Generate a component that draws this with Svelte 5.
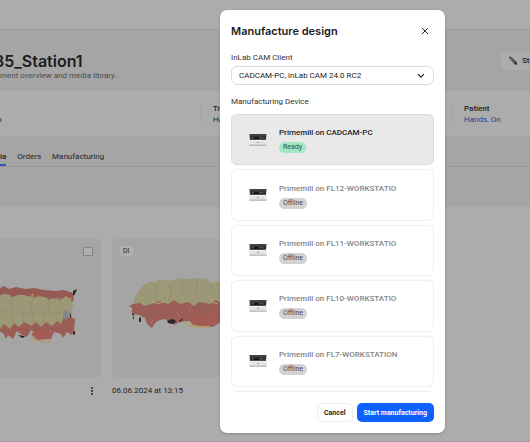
<script>
  const devices = [
    { name: 'Primemill on CADCAM-PC', ready: true },
    { name: 'Primemill on FL12-WORKSTATIO', ready: false },
    { name: 'Primemill on FL11-WORKSTATIO', ready: false },
    { name: 'Primemill on FL10-WORKSTATIO', ready: false },
    { name: 'Primemill on FL7-WORKSTATION', ready: false }
  ];
  let selected = $state(0);
</script>

<div class="page">
  <header class="topbar"></header>

  <section class="title-band">
    <div>
      <h1>35_Station1</h1>
      <p>ment overview and media library.</p>
    </div>
    <button class="start">
      <svg width="10" height="10" viewBox="0 0 10 10" aria-hidden="true">
        <path d="M.8 1.6 2.4.5 9 6.3 9.3 8.8 6.8 8.6Z" fill="#2e2e2e" />
        <path d="m2 2 5.8 5.4M3.7 1.8 2.5 3.3M5.3 3.2 4.1 4.8M7 4.8 5.8 6.3" stroke="#999" stroke-width=".6" />
      </svg>
      <span>Ste</span>
    </button>
  </section>

  <section class="info-band">
    <div class="info first"><strong>&nbsp;</strong><span>o</span></div>
    <div class="info"><strong>Tr</strong><span>Ha</span></div>
    <div class="info last"><strong>Patient</strong><a href="#patient">Hands, On</a></div>
  </section>

  <nav class="tabs">
    <a class="active" href="#media">ia</a>
    <a href="#orders">Orders</a>
    <a href="#manufacturing">Manufacturing</a>
  </nav>
  <div class="filters"></div>

  <main class="media">
    <article class="tile-a">
      <div class="thumb">
        <input type="checkbox" aria-label="Select scan" />
        <svg class="scan" width="78" height="60" viewBox="0 0 78 60" aria-hidden="true">
          <path d="M0 3 4 1 9 4 16 2 25 4 34 3 44 5 55 6 64 5 73 8 74 14 70 21 0 21Z" fill="#955a53" />
          <path d="m73 6 4-2-2 5-2 2ZM69 25l1 0 1 6 1 3-2-2ZM72 47l3-1v4l-2-1Z" fill="#292622" />
          <path d="M0 36 15 31 31 32 45 34 60 30 69 32 75 34 74 46 72 50 67 47 63 53 61 49 50 46 43 53 36 49 31 45 27 52 22 50 17 46 13 54 8 50 6 54 3 48 0 47Z" fill="#9b5e57" />
          <path d="M0 10q5-2 10 0 1 2 3 2 7-4 14-1 4 0 6 2 4-3 11-1 3 0 4 3l5-2 6 2 7-3q7 2 7 9-1 6-4 8l-5 3-3 7-4-3-5 5-6-4-5 5-5-5-5 4-7-4-5 5-5-4-4 6-6-5-4 5Z" fill="#9b9878" />
          <path d="M12 12v15M32 13l-1 14M49 14l-1 13M60 13l1 13M2 26q35 5 68 0M12 28l1 10M23 28v10M33 28v9M43 28v10M53 28v9" fill="none" stroke="#908d6e" stroke-width=".8" />
          <path d="m29 14 4-5-1 5-2 2M49 28l4 8 1 3-4-3M57 12l2 7 2 2M11 32v7l-3 3M39 37l2-5v6M65 11l4 3 3-1" fill="none" stroke="#ad9c56" />
          <path d="m63 28 3-3 3 5-2 5-3-1Z" fill="#80858b" />
          <path d="m31 49 6-4 8 1 9 1-3 7-14 1Z" fill="#a35c54" />
          <path d="M31 51q9 7 21 4l-1 2q-14 2-20-4Z" fill="#a99d72" />
          <path d="m18 50 6 1 1 1-3 1Z" fill="#292622" />
        </svg>
      </div>
      <div class="meta end">
        <button class="more" aria-label="More actions"><i></i><i></i><i></i></button>
      </div>
    </article>
    <article class="tile-b">
      <div class="thumb">
        <span class="tag">DI</span>
        <svg class="scan" width="120" height="54" viewBox="0 0 120 54" aria-hidden="true">
          <path d="M2 29 10 25 20 21 90 20 120 28 120 40 105 41 94 45 86 50 70 49 62 44 53 45 47 48 38 42 33 43 29 45 25 51 20 47 18 41 12 38 5 37 5 31Z" fill="#9b5e57" />
          <path d="m5 36 1 4 1-3ZM6 40v2h1v-2ZM12 41v4h2v-5ZM40 44l4-2 4 1 1 2-4 2-4-1ZM52 44l4-3v1l-3 3Z" fill="#2b2925" />
          <path d="M6 27Q10 12 20 6L25 4 28 6 31 3 41 3 43 4 51 1 61 2 69 1 80 2 84 6 96 3 109 5 120 12V32l-12-7-12 3-7-5-6 4-11-2-5 4-6-4-8 2-6-4-6 4-8-3-6 2-9 3-5-3Z" fill="#9b9878" />
          <path d="M28 6q3 8 0 20M43 5q2 9-1 20M55 3l1 21M70 3l-1 21M84 7l-2 18" fill="none" stroke="#8e8c6d" stroke-width=".8" />
          <path d="m27 24 2 3 8-2-4-2M40 8q3 8 0 18M55 19l2 6M68 24l2-3M82 17l3 8 6 2M25 26l2-5" fill="none" stroke="#afa46a" />
          <path d="M63 42q9-7 27-5v8l-11 5H66Z" fill="#a35c54" />
          <path d="M57 44q9 6 25 5l1 2q-19 2-26-5Z" fill="#ada074" />
          <path d="m26 43-3 4M50 35l2 5M63 32l-1 4" stroke="#a9716c" stroke-width="1.2" />
        </svg>
      </div>
      <div class="meta">06.06.2024 at 13:15</div>
    </article>
  </main>
</div>

<div class="backdrop">
  <div class="modal" role="dialog" aria-modal="true" aria-labelledby="dialog-title">
    <div class="heading">
      <h2 id="dialog-title">Manufacture design</h2>
      <button class="close" aria-label="Close">
        <svg width="8" height="8" viewBox="0 0 8 8" aria-hidden="true">
          <path d="m1 1 6 6M7 1 1 7" stroke="#222" stroke-width="1" />
        </svg>
      </button>
    </div>

    <label class="caption" for="client">InLab CAM Client</label>
    <div class="select">
      <select id="client">
        <option>CADCAM-PC, inLab CAM 24.0 RC2</option>
      </select>
      <svg width="8" height="6" viewBox="0 0 8 6" aria-hidden="true">
        <path d="m1 1.2 3 3 3-3" fill="none" stroke="#222" stroke-width="1.2" />
      </svg>
    </div>

    <div class="caption device-caption" id="device-caption">Manufacturing Device</div>
    <div class="list" role="radiogroup" aria-labelledby="device-caption">
      {#each devices as device, i}
        <label class="device" class:selected={selected === i} class:offline={!device.ready}>
          <input type="radio" name="device" value={i} bind:group={selected} disabled={!device.ready} />
          <svg width="18" height="12" viewBox="0 0 18 12" aria-hidden="true">
            <path d="M.5 0h17l-.6 6.5H1Z" fill="#303234" />
            <path d="M1 1h16M3 3.5h11" stroke="#686b6e" stroke-width=".6" />
            <path d="M5 3h5v2H5Z" fill="#15181a" />
            <path d="M.5 6h17l.2 5H.3Z" fill="#e4e4e6" />
            <path d="M1 6.3h16" stroke="#fafafa" stroke-width=".7" />
            <path d="M.4 11.2h17.2" stroke="#929294" stroke-width=".8" />
            <path d="M8.5 8h1v1h-1Z" fill="#555" />
          </svg>
          <span class="text">
            <span class="name">{device.name}</span>
            <span class="status">{device.ready ? 'Ready' : 'Offline'}</span>
          </span>
        </label>
      {/each}
      <div class="device" aria-hidden="true"></div>
    </div>

    <div class="actions">
      <button class="cancel">Cancel</button>
      <button class="primary">Start manufacturing</button>
    </div>
  </div>
</div>

<style>
  :global(body) {
    background: #acacac;
  }
  :global(*) {
    box-sizing: border-box;
  }
  .page,
  .backdrop {
    font-family: Roboto, 'Liberation Sans', sans-serif;
    font-size: 8px;
    line-height: 10px;
    color: #242424;
  }
  h1, h2, p {
    margin: 0;
  }
  h1, h2 {
    font-family: Inter, 'Liberation Sans', sans-serif;
    font-weight: 600;
    color: #1c1c1c;
  }
  button, select, input {
    font: inherit;
    color: inherit;
    margin: 0;
    padding: 0;
    border: 0;
    background: none;
  }
  a {
    color: inherit;
    text-decoration: none;
  }
  .page {
    min-height: 100vh;
    overflow: hidden;
    background: #acacac;
    border-bottom: 1px solid #a0a0a0;
  }
  .topbar {
    height: 29px;
  }
  .title-band {
    display: flex;
    justify-content: space-between;
    height: 62px;
    padding-top: 22px;
    background: #a5a5a5;
    border-top: 1px solid #9f9f9f;
  }
  h1 {
    margin-left: -6px;
    font-size: 16px;
    line-height: 19px;
  }
  .title-band p {
    line-height: 10px;
    color: #4c4c4c;
  }
  .start {
    display: flex;
    align-items: center;
    gap: 4px;
    width: 29px;
    height: 18px;
    padding-left: 7px;
    overflow: hidden;
    border-radius: 4px 0 0 4px;
    background: #acacac;
    font-weight: 500;
  }
  .start svg {
    flex: none;
  }
  .info-band {
    display: flex;
    height: 45px;
    padding-top: 12px;
  }
  .info {
    display: flex;
    flex-direction: column;
    flex: 1;
    height: 20px;
    padding-left: 11px;
    border-left: 1px solid #a0a0a0;
    line-height: 11px;
  }
  .info strong {
    font-weight: 500;
  }
  .info.first {
    flex: none;
    width: 204px;
    padding-left: 0;
    margin-left: -3px;
    border: 0;
  }
  .info.last {
    flex: none;
    width: 78px;
  }
  .info a {
    color: #234391;
  }
  .tabs {
    display: flex;
    gap: 11px;
    height: 31px;
    padding-top: 16px;
    background: #a5a5a5;
    border-bottom: 1px solid #999;
  }
  .tabs a {
    height: 14px;
  }
  .tabs .active {
    font-weight: 500;
    border-bottom: 2px solid #3358b0;
  }
  .filters {
    height: 40px;
    background: #a5a5a5;
  }
  .media {
    display: flex;
    gap: 11px;
    padding-top: 32px;
  }
  .tile-a {
    width: 101px;
  }
  .tile-b {
    width: 140px;
  }
  .thumb {
    position: relative;
    height: 138px;
    border-radius: 4px;
    background: #a5a5a5;
    overflow: hidden;
  }
  .tile-a .thumb {
    border-radius: 0 4px 4px 0;
  }
  .thumb input {
    position: absolute;
    top: 8px;
    right: 8px;
    width: 10px;
    height: 9px;
    appearance: none;
    border: 1px solid #858585;
    border-radius: 1px;
    background: #b0b0b0;
  }
  .tag {
    position: absolute;
    top: 7px;
    left: 8px;
    padding: 0 3px;
    border-radius: 3px;
    background: #b0b0b0;
    font-size: 7px;
  }
  .scan {
    position: absolute;
    top: 46px;
    left: 0;
  }
  .tile-b .scan {
    top: 38px;
    left: 15px;
  }
  .meta {
    display: flex;
    align-items: center;
    height: 28px;
  }
  .end {
    justify-content: flex-end;
    padding-right: 8px;
  }
  .more {
    display: flex;
    flex-direction: column;
    gap: 1px;
  }
  .more i {
    width: 2px;
    height: 2px;
    border-radius: 1px;
    background: #222;
  }
  .backdrop {
    position: absolute;
    inset: 0;
    display: flex;
    padding: 10px 85px 9px 220px;
  }
  .modal {
    display: flex;
    flex-direction: column;
    flex: 1;
    min-width: 0;
    padding: 11px;
    border-radius: 7px;
    background: #fff;
    box-shadow: 0 1px 3px #0003;
  }
  .heading {
    display: flex;
    justify-content: space-between;
    align-items: center;
    height: 20px;
    margin-bottom: 12px;
    padding-right: 5px;
  }
  h2 {
    font-size: 11px;
    line-height: 16px;
  }
  .close {
    display: flex;
  }
  .caption {
    color: #333;
  }
  .select {
    display: flex;
    align-items: center;
    position: relative;
    height: 19px;
    margin: 3px 0 12px;
  }
  select {
    appearance: none;
    width: 100%;
    height: 100%;
    padding: 0 20px 0 7px;
    border: 1px solid #dcdcdc;
    border-radius: 6px;
    background: #fff;
  }
  .select svg {
    position: absolute;
    right: 9px;
    pointer-events: none;
  }
  .device-caption {
    margin-bottom: 7px;
  }
  .list {
    display: grid;
    grid-template-rows: repeat(5, minmax(0, 1fr)) 1px;
    gap: 4px;
    flex: 1;
    min-height: 0;
    overflow: hidden;
  }
  .device {
    position: relative;
    display: flex;
    align-items: center;
    min-height: 50px;
    padding-left: 17px;
    gap: 12px;
    border: 1px solid #f0f0f0;
    border-radius: 6px;
    background: #fff;
    box-shadow: 0 0 2px #0000000d;
  }
  .device input {
    position: absolute;
    inset: 0;
    width: 100%;
    height: 100%;
    appearance: none;
  }
  .selected {
    background: #e9e9e9;
    border-color: #dcdcdc;
  }
  .text {
    display: flex;
    flex-direction: column;
    align-items: flex-start;
    gap: 4px;
    padding-top: 2px;
  }
  .name {
    font-weight: 500;
  }
  .offline .name {
    color: #858585;
  }
  .status {
    padding: 0 4px;
    border-radius: 6px;
    background: #a5e6c3;
    color: #1f5c3d;
    font-size: 7px;
    line-height: 11px;
  }
  .offline .status {
    background: #d2d2d2;
    color: #484848;
  }
  .actions {
    display: flex;
    justify-content: flex-end;
    gap: 4px;
    margin-top: 11px;
  }
  .actions button {
    height: 19px;
    border-radius: 5px;
    font-size: 7px;
    font-weight: 700;
  }
  .cancel {
    padding: 0 6px;
    border: 1px solid #ececec;
  }
  .primary {
    padding: 0 7px;
    background: #0d61ff;
    color: #fff;
  }
</style>
